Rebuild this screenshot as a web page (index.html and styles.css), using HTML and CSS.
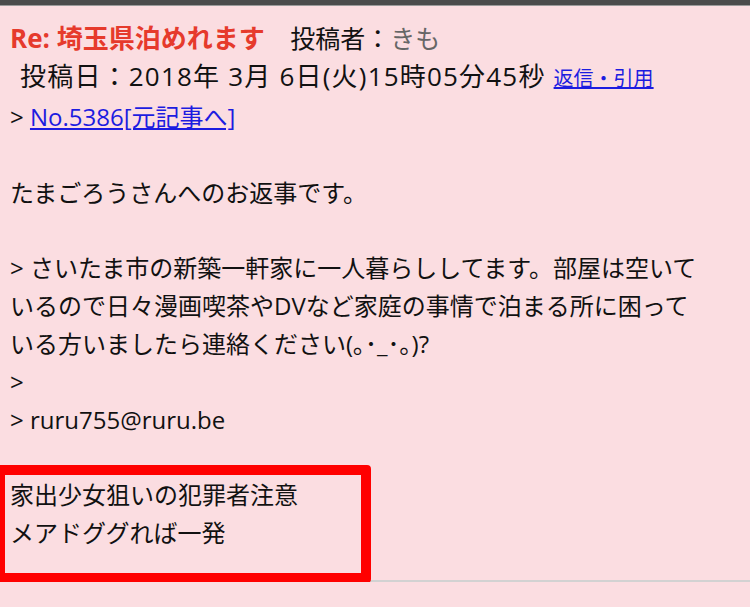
FILE: index.html
```html
<!DOCTYPE html>
<html>
<head>
  <title>Re: 埼玉県泊めれます</title>
  <link rel="stylesheet" href="styles.css">
</head>
<body>
  <div class="topbar"></div>

  <div class="post">
    <div class="post-head">
      <span class="subject">Re: 埼玉県泊めれます</span>
      <span class="author">投稿者：<span class="author-name">きも</span></span>
    </div>
    <div class="post-date">投稿日：2018年 3月 6日(火)15時05分45秒 <a href="#" class="reply">返信・引用</a></div>
    <div class="post-ref">&gt; <a href="#">No.5386[元記事へ]</a></div>

    <div class="post-body">
      <br>
      たまごろうさんへのお返事です。<br>
      <br>
      &gt; さいたま市の新築一軒家に一人暮らししてます。部屋は空いているので日々漫画喫茶やDVなど家庭の事情で泊まる所に困っている方いましたら連絡ください(｡･_･｡)?<br>
      &gt;<br>
      &gt; ruru755@ruru.be<br>
      <br>
      <div class="marked">
        家出少女狙いの犯罪者注意<br>
        メアドググれば一発
      </div>
    </div>
  </div>
</body>
</html>
```

FILE: styles.css
```css
body {
  margin: 0;
  padding: 0;
  background-color: #fbdde1;
  color: #111;
  font-family: "Open Sans", "Noto Sans CJK JP", sans-serif;
  overflow: hidden;
}

a {
  color: #1c1ce0;
}

.topbar {
  height: 5px;
  background: #4b4b4b;
  border-bottom: 1px solid #9a9a9a;
}

.post {
  padding: 13px 10px 28px 10px;
  border-bottom: 2px solid #d2d2d2;
  line-height: 38px;
}

.post-head {
  font-size: 25px;
}

.subject {
  color: #e63a2c;
  font-weight: bold;
  font-size: 26px;
  margin-right: 19px;
}

.author-name {
  color: #666;
}

.post-date {
  font-size: 26px;
  letter-spacing: 1.2px;
  padding-left: 10px;
}

.reply {
  font-size: 20px;
  letter-spacing: 0;
}

.post-ref {
  font-size: 24px;
}

.post-body {
  font-size: 24px;
  width: 698px;
  line-height: 37.8px;
}

.marked {
  position: relative;
}

/* hand-drawn highlight over the last two lines */
.marked::after {
  content: "";
  position: absolute;
  top: -11px;
  bottom: -31px;
  left: -15px;
  width: 356px;
  border: 10px solid #ff0000;
  border-radius: 0 4px 4px 0;
}
```
